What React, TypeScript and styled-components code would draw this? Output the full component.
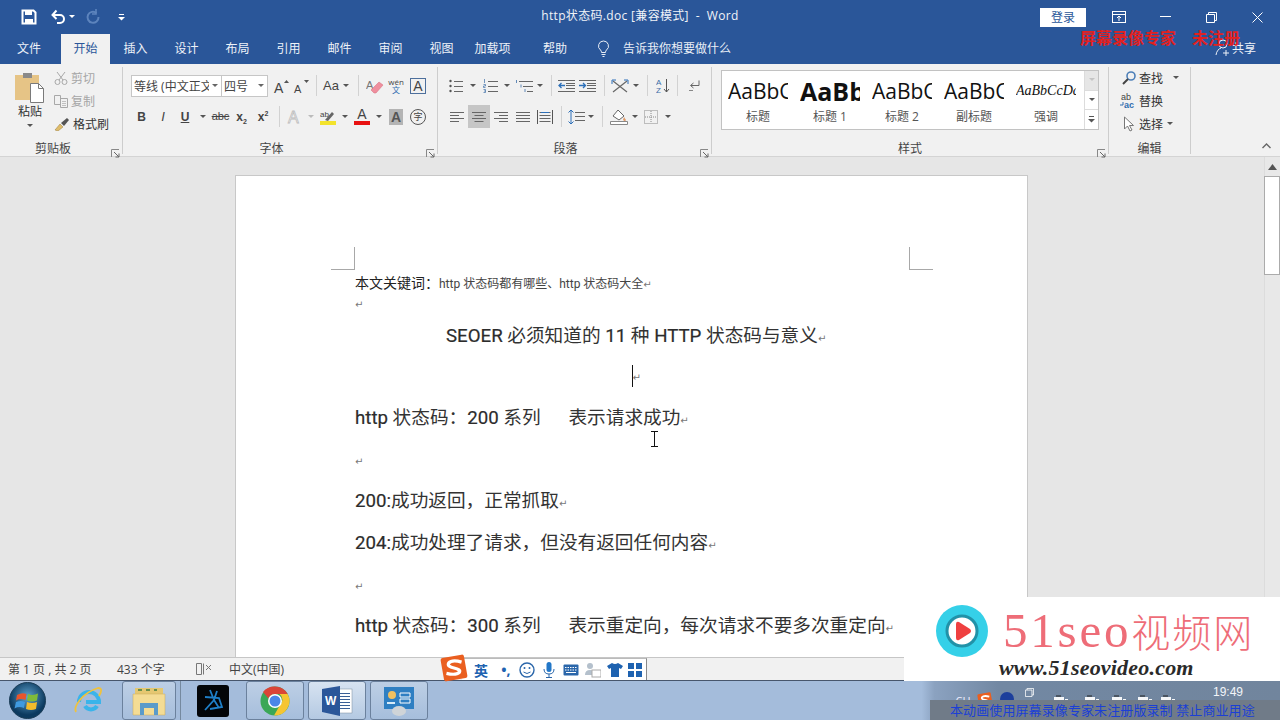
import React from "react";
import styled, { createGlobalStyle } from "styled-components";

const Global = createGlobalStyle`
  html, body { margin: 0; padding: 0; background: #fff; }
  body { font-family: "Open Sans", "Noto Sans CJK SC", sans-serif; }
  * { box-sizing: border-box; }
`;

const App0 = styled.div`
  position: relative; width: 1280px; height: 720px; overflow: hidden;
  display: flex; flex-direction: column; font-size: 12px; color: #444;
`;
const TitleBar = styled.div`
  height: 34px; background: #2a5699; display: grid; grid-template-columns: 1fr auto 1fr; align-items: center; color: #fff;
`;
const Qat = styled.div`display: flex; align-items: center; height: 34px; padding-left: 19px; gap: 0;`;
const QatBtn = styled.div<{ $w: number }>`
  width: ${p => p.$w}px; height: 34px; display: flex; align-items: center; justify-content: center;
`;
const Title = styled.div`font-size: 12px; color: #f0f3f8; letter-spacing: 0.33px; white-space: pre; padding-bottom: 4px;`;
const WinControls = styled.div`display: flex; justify-content: flex-end; align-items: center; height: 34px;`;
const Login = styled.div`
  width: 46px; height: 19px; background: #fff; color: #2a5699; margin-right: 10px;
  display: flex; align-items: center; justify-content: center; font-size: 12px;
`;
const WinBtn = styled.div`width: 46px; height: 34px; display: flex; align-items: center; justify-content: center;`;

const TabBar = styled.div`height: 30px; background: #2a5699; display: flex; align-items: stretch; position: relative;`;
const Tab = styled.div<{ $w: number; $active?: boolean; $pr?: number }>`
  width: ${p => p.$w}px; display: flex; align-items: center; justify-content: center; font-size: 12px; padding-bottom: 2px;
  padding-right: ${p => p.$pr ?? 0}px;
  background: ${p => (p.$active ? "#f1f1f1" : "transparent")};
  color: ${p => (p.$active ? "#2a5699" : "#eef2f8")};
`;
const TellMe = styled.div`display: flex; align-items: center; gap: 13px; padding-left: 5px; padding-bottom: 2px; color: #e9eef6; font-size: 12px;`;
const Share = styled.div`
  margin-left: auto; display: flex; align-items: center; gap: 1px; padding-right: 24px; padding-bottom: 2px; color: #eef2f8; font-size: 12px;
`;

const Ribbon = styled.div`
  height: 93px; background: #f1f1f1; border-bottom: 1px solid #d4d4d4; display: flex; padding-top: 3px; align-items: flex-start;
`;
const Group = styled.div<{ $w: number; $bare?: boolean }>`
  width: ${p => p.$w}px; height: 87px; flex: none; position: relative; display: flex; flex-direction: column;
  border-right: ${p => (p.$bare ? "none" : "1px solid #cdcdcd")};
`;
const GroupBody = styled.div`height: 71px; flex: none; display: flex;`;
const GroupLabel = styled.div<{ $pr?: number }>`
  height: 16px; flex: none; margin-top: 2px; display: flex; align-items: center; justify-content: center; font-size: 12px; color: #444;
  padding-right: ${p => p.$pr ?? 0}px;
`;
const Launcher = styled.div`position: absolute; right: 2px; bottom: 0; width: 9px; height: 9px;`;
const Collapse = styled.div`position: absolute; right: 9px; bottom: 1px;`;

const PasteCol = styled.div`
  width: 50px; padding-top: 5px; display: flex; flex-direction: column; align-items: center; flex: none; margin-left: 5px; margin-right: -1px;
  font-size: 12px; color: #333; line-height: 14px;
`;
const PasteLabel = styled.div`margin-top: 1px;`;
const ClipCol = styled.div`display: flex; flex-direction: column; margin-top: -1px;`;
const ClipRow = styled.div<{ $off?: boolean }>`
  height: 23px; display: flex; align-items: center; gap: 3px; font-size: 12px; color: ${p => (p.$off ? "#a6a6a6" : "#333")};
`;
const RowStack = styled.div<{ $left: number }>`
  padding-left: ${p => p.$left}px; padding-top: 7px; display: flex; flex-direction: column; gap: 8px;
`;
const Row = styled.div`display: flex; align-items: center; height: 23px;`;
const Combo = styled.div<{ $w: number }>`
  width: ${p => p.$w}px; height: 22px; background: #fff; border: 1px solid #c6c6c6; display: flex; align-items: center;
  padding-left: 2px; font-size: 12px; color: #444; white-space: nowrap; overflow: hidden; justify-content: space-between;
  margin-right: -1px;
`;
const ComboText = styled.span`overflow: hidden; flex: 1;`;
const ComboArrow = styled.span`width: 12px; flex: none; display: flex; justify-content: center; background: #fff;`;
const Btn = styled.div<{ $w: number; $on?: boolean }>`
  width: ${p => p.$w}px; height: 23px; flex: none; display: flex; align-items: center; justify-content: center;
  background: ${p => (p.$on ? "#c6c6c6" : "transparent")};
`;
const VSep = styled.div<{ $w: number }>`
  width: ${p => p.$w}px; height: 23px; flex: none; position: relative;
  &::after { content: ""; position: absolute; left: 50%; top: 1px; bottom: 1px; width: 1px; background: #d2d2d2; }
`;
const Dd = styled.div<{ $w: number; $off?: boolean; $short?: boolean }>`
  width: ${p => p.$w}px; height: ${p => (p.$short ? 12 : 23)}px; flex: none; display: flex; align-items: center; justify-content: center;
  &::after { content: ""; border-left: 3px solid transparent; border-right: 3px solid transparent;
    border-top: 3px solid ${p => (p.$off ? "#bbb" : "#555")}; }
`;
const Letter = styled.span<{ $b?: boolean; $i?: boolean; $c?: string; $s?: number }>`
  font-family: "Liberation Sans", sans-serif; font-size: ${p => p.$s ?? 12}px;
  font-weight: ${p => (p.$b ? 700 : 400)}; font-style: ${p => (p.$i ? "italic" : "normal")};
  color: ${p => p.$c ?? "#444"}; line-height: 1;
`;
const Under = styled(Letter)`text-decoration: underline;`;
const Strike = styled(Letter)`text-decoration: line-through;`;
const Sub = styled.sub`font-size: 7px; line-height: 0;`;
const Sup = styled.sup`font-size: 7px; line-height: 0;`;
const ColorA = styled.span<{ $bar: string }>`
  display: inline-flex; flex-direction: column; align-items: center; font-family: "Liberation Sans", sans-serif;
  font-size: 14px; line-height: 13px; color: #444; width: 16px;
  &::after { content: ""; display: block; width: 16px; height: 4px; background: ${p => p.$bar}; }
`;
const GrayA = styled.span`
  width: 14px; height: 16px; background: #b4b4b4; display: flex; align-items: center; justify-content: center;
  font-family: "Liberation Sans", sans-serif; font-size: 14px; font-weight: 700; color: #555;
`;
const BoxA = styled.span`
  width: 16px; height: 16px; border: 1px solid #4d6f9c; display: flex; align-items: center; justify-content: center;
  font-family: "Liberation Sans", sans-serif; font-size: 14px; color: #444;
`;
const CircleChar = styled.span`
  width: 16px; height: 16px; border-radius: 50%; border: 1px solid #555; display: flex; align-items: center; justify-content: center;
  font-size: 9px; color: #444;
`;
const Wen = styled.span`
  display: flex; flex-direction: column; align-items: center; font-size: 8px; line-height: 8px; color: #444;
  & > b { color: #2f6db0; font-weight: 400; }
`;

const Gallery = styled.div`
  margin: 3px 0 0 9px; width: 378px; height: 60px; background: #fff; border: 1px solid #c2c2c2; display: flex;
`;
const StyleItem = styled.div`
  width: 72px; flex: none; display: flex; flex-direction: column; align-items: center; padding-top: 4px;
`;
const Preview = styled.div<{ $kind?: "bold" | "em" }>`
  width: 60px; height: 32px; overflow: hidden; white-space: nowrap; display: flex; align-items: center; color: #111;
  font-family: ${p => (p.$kind === "em" ? '"Liberation Serif", serif' : '"Open Sans", sans-serif')};
  font-size: ${p => (p.$kind === "bold" ? 25 : p.$kind === "em" ? 14 : 21)}px;
  font-weight: ${p => (p.$kind === "bold" ? 700 : 400)};
  font-style: ${p => (p.$kind === "em" ? "italic" : "normal")};
`;
const StyleName = styled.div`font-size: 12px; color: #555; line-height: 16px; margin-top: 2px;`;
const GalleryScroll = styled.div`
  margin-left: auto; width: 14px; display: flex; flex-direction: column; border-left: 1px solid #dcdcdc;
`;
const GalleryCell = styled.div<{ $off?: boolean }>`
  flex: 1; display: flex; align-items: center; justify-content: center; border-bottom: 1px solid #dcdcdc;
  background: ${p => (p.$off ? "#e6e6e6" : "#fff")}; &:last-child { border-bottom: none; }
`;
const EditCol = styled.div`display: flex; flex-direction: column; padding-left: 11px; margin-top: -1px;`;
const EditRow = styled.div`height: 23px; display: flex; align-items: center; font-size: 12px; color: #333; gap: 2px;`;
const EditIcon = styled.span`width: 17px; display: flex; justify-content: center; flex: none;`;
const EditDd = styled.span<{ $w: number }>`
  width: ${p => p.$w}px; display: flex; justify-content: flex-end;
  &::after { content: ""; border-left: 3px solid transparent; border-right: 3px solid transparent; border-top: 3px solid #555; }
`;

const Workspace = styled.div`height: 500px; background: #e6e6e6; display: flex; overflow: hidden; padding-left: 235px;`;
const Page = styled.div`
  position: relative; width: 793px; height: 600px; margin-top: 18px; background: #fff; border: 1px solid #c8c8c8;
  padding: 96px 110px 0 119px; flex: none; color: #333;
`;
const Crop = styled.div<{ $right?: boolean }>`
  position: absolute; top: 71px; width: 24px; height: 23px; border-bottom: 1px solid #a8a8a8;
  ${p => (p.$right ? "left: 673px; border-left: 1px solid #a8a8a8;" : "left: 95px; border-right: 1px solid #a8a8a8;")}
`;
const Line = styled.div<{ $h: number; $center?: boolean; $adj?: number }>`
  height: ${p => p.$h}px; line-height: ${p => p.$h + (p.$adj ?? 4)}px; white-space: pre;
  text-align: ${p => (p.$center ? "center" : "left")};
  font-size: 18.67px; color: #333; font-family: Roboto, "Noto Sans CJK SC", sans-serif;
`;
const Lat = styled.span`color: #2c2c2c; -webkit-text-stroke: 0.2px #2c2c2c;`;
const KeyA = styled.span`font-size: 14px; color: #222;`;
const KeyB = styled.span`font-size: 12px; color: #444;`;
const Mark = styled.span`
  display: inline-block; font-family: "DejaVu Sans", sans-serif; font-size: 10px; color: #777; line-height: 1; width: 8px;
`;
const Caret = styled.span`display: inline-block; width: 1px; height: 22px; background: #111; vertical-align: middle;`;
const VScroll = styled.div`
  margin-left: auto; width: 16px; background: #e8e8e8; display: flex; flex-direction: column; flex: none; border-left: 1px solid #dcdcdc;
`;
const VArrow = styled.div`height: 19px; display: flex; align-items: center; justify-content: center;`;
const VThumb = styled.div`height: 99px; background: #fff; border: 1px solid #ababab; margin-left: -1px;`;

const StatusBar = styled.div`
  height: 24px; background: #f1f1f1; border-top: 1px solid #c6c6c6; border-bottom: 1px solid #47566c;
  display: flex; align-items: center; padding-left: 8px; font-size: 12px; color: #444; white-space: pre;
`;
const StatusItem = styled.span<{ $w: number }>`width: ${p => p.$w}px; flex: none; display: flex; align-items: center;`;

const Taskbar = styled.div`
  flex: 1; display: flex; align-items: stretch; background: linear-gradient(90deg, #a4bcdb 0 72%, #8ba2c0 73%, #7288a3 78%, #71859d 100%);
  position: relative;
`;
const TaskSlot = styled.div<{ $w: number }>`width: ${p => p.$w}px; flex: none; display: flex; align-items: center; justify-content: center;`;
const TaskButton = styled.div<{ $w: number; $active?: boolean }>`
  width: ${p => p.$w}px; flex: none; margin-right: 4px; display: flex; align-items: center; justify-content: center;
  border: 1px solid #6b819d; border-radius: 3px;
  background: ${p => (p.$active ? "linear-gradient(180deg,#d7e3f1,#b4c9e2)" : "linear-gradient(180deg,#bdcfe5,#a6bedc)")};
`;
const TaskDivider = styled.div`width: 1px; flex: none; margin: 0 6px 0 0; background: #75899f;`;
const Tray = styled.div`
  margin-left: auto; display: flex; align-items: flex-start; color: #eef; width: 325px; position: relative; font-size: 11px;
`;
const TrayItem = styled.span<{ $w: number; $top?: number }>`
  width: ${p => p.$w}px; flex: none; display: flex; justify-content: center; padding-top: ${p => p.$top ?? 11}px;
`;
const Clock = styled.span`margin-left: auto; margin-right: 37px; padding-top: 4px; color: #f2f5f9; font-size: 12px; font-family: "Liberation Sans", sans-serif;`;

const RedMark = styled.div`
  position: absolute; left: 1080px; top: 29px; color: #e2211f; font-size: 16px; font-weight: 700; line-height: 18px; white-space: pre;
`;
const Notice = styled.div`
  position: absolute; left: 930px; top: 700px; width: 350px; height: 20px; background: #707b88; color: #1b3fd6; font-size: 13px;
  line-height: 20px; padding-left: 20px; white-space: pre; letter-spacing: 0.1px;
`;
const Ime = styled.div`
  position: absolute; left: 462px; top: 658px; width: 185px; height: 22px; background: #fff; border-right: 1px solid #8a8a8a;
  border-top: 1px solid #bbb; display: flex; align-items: center;
`;
const ImeLogo = styled.div`position: absolute; left: 440px; top: 654px;`;
const ImeSlot = styled.span<{ $w: number }>`width: ${p => p.$w}px; flex: none; display: flex; align-items: center; justify-content: center;`;
const ImeChar = styled.span`color: #1e62b0; font-weight: 700; font-size: 14px;`;
const Beam = styled.div`position: absolute; left: 650px; top: 431px;`;
const Watermark = styled.div`
  position: absolute; left: 904px; top: 597px; width: 376px; height: 84px; background: #fff;
  display: flex; flex-direction: column; padding: 6px 0 0 32px;
`;
const WmTop = styled.div`display: flex; align-items: center; height: 55px;`;
const WmName = styled.div`
  margin-left: 15px; color: #ee6d78; font-family: "Liberation Serif", serif; font-size: 49px; letter-spacing: 2.8px; line-height: 55px; white-space: nowrap;
`;
const WmCjk = styled.span`font-family: "Noto Sans CJK SC", sans-serif; font-size: 39px; letter-spacing: 2px; font-weight: 300;`;
const WmUrl = styled.div`
  margin-left: 63px; margin-top: -2px; color: #2a2a2a; font-family: "Liberation Serif", serif; font-style: italic; font-weight: 700;
  font-size: 22px; line-height: 24px; letter-spacing: 0.2px; white-space: nowrap;
`;

const Lines = ({ x = 0, w = 14, ys, c = "#666" }: { x?: number; w?: number; ys: number[]; c?: string }) => (
  <>{ys.map(y => <path key={y} d={`M${x} ${y}.5h${w}`} stroke={c} fill="none" />)}</>
);
const Svg = ({ w = 16, h = 16, children }: { w?: number; h?: number; children: React.ReactNode }) => (
  <svg width={w} height={h} viewBox={`0 0 ${w} ${h}`}>{children}</svg>
);

const SaveIcon = () => (
  <Svg><path d="M1.5 1.5h11l2 2v11h-13z" fill="none" stroke="#fff" strokeWidth="2" /><rect x="4" y="2" width="7" height="4" fill="#fff" /><rect x="4" y="10" width="8" height="5" fill="#fff" /></Svg>
);
const UndoIcon = () => (
  <Svg><path d="M3 6h7a4 4 0 0 1 0 8H7" fill="none" stroke="#fff" strokeWidth="2" /><path d="M6.5 1.5 2.5 6l4 4" fill="none" stroke="#fff" strokeWidth="2" /></Svg>
);
const RedoIcon = () => (
  <Svg><path d="M11.5 4A5.5 5.5 0 1 0 13.5 8" fill="none" stroke="#5d84bd" strokeWidth="2" /><path d="M11 0v5h-4" fill="none" stroke="#5d84bd" strokeWidth="1.6" /></Svg>
);
const SmallDown = ({ c = "#fff" }: { c?: string }) => (
  <Svg w={6} h={4}><path d="M0 0h6L3 3z" fill={c} /></Svg>
);
const Customize = ({ c = "#fff" }: { c?: string }) => (
  <Svg w={7} h={7}><path d="M1 .5h5" stroke={c} /><path d="M0 3h7L3.5 6.5z" fill={c} /></Svg>
);
const RibbonDisp = () => (
  <Svg w={14} h={12}><rect x=".5" y=".5" width="13" height="11" fill="none" stroke="#fff" /><path d="M1 3.5h12M7 10V5M5 7l2-2 2 2" fill="none" stroke="#fff" /></Svg>
);
const MinI = () => <Svg w={11} h={2}><path d="M0 .5h11" stroke="#fff" /></Svg>;
const RestoreI = ({ s = 11 }: { s?: number }) => (
  <svg width={s} height={s} viewBox="0 0 11 11"><path d="M.5 2.5h8v8h-8zM2.5 2.5v-2h8v8h-2" fill="none" stroke="#fff" /></svg>
);
const CloseI = () => <Svg w={11} h={11}><path d="M.5.5l10 10M10.5.5l-10 10" stroke="#fff" fill="none" /></Svg>;
const Bulb = () => (
  <Svg w={13} h={17}><path d="M6.5 1a5 5 0 0 0-3 9c.7.6 1 1.500 1 2.500h4c0-1 .3-1.900 1-2.500a5 5 0 0 0-3-9zM4.500 14.500h4M5.500 16.500h2" fill="none" stroke="#e9eef6" /></Svg>
);
const PersonPlus = () => (
  <Svg w={16} h={18}><circle cx="8" cy="5" r="4" fill="none" stroke="#eef2f8" /><path d="M1 16c.5-4 3-6.500 5-7M11 11v6M8 14h6" fill="none" stroke="#eef2f8" /></Svg>
);
const PasteIcon = () => (
  <Svg w={30} h={32}>
    <rect x="0" y="3" width="24" height="25" fill="#e6c486" />
    <rect x="8" y="1" width="9" height="5" fill="#8a8a8a" />
    <path d="M15.500 11.500h8l5 5v14h-13z" fill="#fff" stroke="#7a7a7a" />
    <path d="M23.500 11.500v5h5" fill="none" stroke="#7a7a7a" />
  </Svg>
);
const CutIcon = () => (
  <Svg w={14} h={14}><path d="M3 1l6 8M11 1L5 9" stroke="#a8a8a8" fill="none" /><circle cx="3.500" cy="11" r="2.500" fill="none" stroke="#a8a8a8" /><circle cx="10.500" cy="11" r="2.500" fill="none" stroke="#a8a8a8" /></Svg>
);
const CopyIcon = () => (
  <Svg w={14} h={14}><path d="M.5 1.500h6v9h-6zM6.500 4.500h7v9h-7z" fill="#f1f1f1" stroke="#a8a8a8" /><Lines x={8} w={4} ys={[7, 9, 11]} c="#c0c0c0" /></Svg>
);
const BrushIcon = () => (
  <Svg w={16} h={14}><path d="M1 13l5-6 3 3-5 4z" fill="#e0bd6b" stroke="#9a7d3a" strokeWidth=".5" /><path d="M7 6l6-5 2 2-5 6z" fill="#555" /></Svg>
);
const GrowA = ({ up }: { up: boolean }) => (
  <Svg w={16} h={16}>
    <text x="1" y="15" fontFamily="Liberation Sans" fontSize={up ? 14 : 11} fill="#444">A</text>
    <path d={up ? "M11 5l2.500-3L16 5z" : "M11 2h5l-2.500 3z"} fill="#555" />
  </Svg>
);
const EraserIcon = () => (
  <Svg w={18} h={16}><text x="0" y="11" fontFamily="Liberation Sans" fontSize="11" fill="#777">A</text><path d="M5 12l8-8 4 3-7 8H8z" fill="#ef8f9e" stroke="#d46a7a" strokeWidth=".5" /></Svg>
);
const OutlineA = () => (
  <svg width="16" height="16" viewBox="0 0 16 16"><text x="1" y="14" fontFamily="Liberation Sans" fontSize="16" fill="#fff" stroke="#bdbdbd" strokeWidth=".8">A</text></svg>
);
const HighlightIcon = () => (
  <Svg w={16} h={16}><text x="0" y="8" fontFamily="Liberation Sans" fontSize="8" fill="#444">ab</text><path d="M5 11l7-8 2 2-6 7z" fill="#666" /><rect y="12" width="16" height="4" fill="#f3e32c" /></Svg>
);
const Bullets = () => (
  <Svg w={14} h={14}>
    <circle cx="1.500" cy="2" r="1.200" fill="#555" /><circle cx="1.500" cy="7" r="1.200" fill="#555" /><circle cx="1.500" cy="12" r="1.200" fill="#555" />
    <Lines x={5} w={9} ys={[2, 7, 12]} />
  </Svg>
);
const Numbers = () => (
  <Svg w={15} h={14}>
    <path d="M1.500 0v4M.500 5.500h2v1.500h-2v1.500h2M.500 10.500h2v3h-2M1 12h1.500" stroke="#3c6ea8" fill="none" strokeWidth=".7" />
    <Lines x={5} w={10} ys={[2, 7, 12]} />
  </Svg>
);
const Multi = () => (
  <Svg w={17} h={14}>
    <path d="M.500 1v3M5 5.500v3M9 10v3" stroke="#3c6ea8" strokeWidth=".8" fill="none" />
    <Lines x={3} w={14} ys={[2]} /><Lines x={7} w={10} ys={[7]} /><Lines x={11} w={6} ys={[12]} />
  </Svg>
);
const Indent = ({ dec }: { dec: boolean }) => (
  <Svg w={17} h={14}>
    <Lines x={0} w={17} ys={[1, 12]} /><Lines x={8} w={9} ys={[4, 6, 9]} />
    <path d={dec ? "M7 6.500H1M3.500 4l-2.500 2.500 2.500 2.500" : "M0 6.500h6M4 4l2.500 2.500L4 9"} stroke="#2c6fb8" strokeWidth="1.300" fill="none" />
  </Svg>
);
const ChineseLayout = () => (
  <Svg w={18} h={14}><path d="M2 2l14 11M16 2L2 13" stroke="#666" strokeWidth="1.200" fill="none" /><path d="M1 5V1h4M17 5V1h-4" stroke="#2c6fb8" fill="none" /></Svg>
);
const SortIcon = () => (
  <Svg w={14} h={16}>
    <text x="0" y="7" fontFamily="Liberation Sans" fontSize="8" fill="#3c6ea8">A</text>
    <text x="0" y="15" fontFamily="Liberation Sans" fontSize="8" fill="#3c6ea8">Z</text>
    <path d="M10.500 1v13M8 11l2.500 3 2.500-3" stroke="#555" fill="none" />
  </Svg>
);
const ParaMark = () => (
  <Svg w={12} h={12}><path d="M11 .5v5H3M5.500 3l-3 2.500 3 2.500" stroke="#666" fill="none" /><path d="M1 10.500h4" stroke="#888" fill="none" /></Svg>
);
const Align = ({ k }: { k: "l" | "c" | "r" | "j" }) => {
  const wid = k === "j" ? [14, 14, 14, 14] : [14, 9, 14, 9];
  return (
    <Svg w={14} h={12}>
      {wid.map((w, i) => {
        const x = k === "c" ? (14 - w) / 2 : k === "r" ? 14 - w : 0;
        return <path key={i} d={`M${x} ${i * 3 + 1}.5h${w}`} stroke="#666" fill="none" />;
      })}
    </Svg>
  );
};
const Distribute = () => (
  <Svg w={16} h={16}><path d="M.500 1v14M15.500 1v14" stroke="#555" fill="none" /><Lines x={2.500} w={11} ys={[3, 6, 9, 12]} /><path d="M4 3.500h8" stroke="#2c6fb8" /></Svg>
);
const SpacingIcon = () => (
  <Svg w={17} h={16}><path d="M3 1v14M.500 3.500 3 1l2.500 2.500M.500 12.500 3 15l2.500-2.500" stroke="#2c6fb8" fill="none" /><Lines x={7} w={10} ys={[3, 7, 11]} /></Svg>
);
const ShadingIcon = () => (
  <Svg w={18} h={17}><path d="M3 8l5-6 6 6-5 4z" fill="#fff" stroke="#666" /><path d="M14 9l2 3-1 1.500-2-1.500z" fill="#e09a6a" /><path d="M.500 13.500h17v3H.500z" fill="#fff" stroke="#888" /></Svg>
);
const BorderIcon = () => (
  <Svg w={14} h={14}><rect x=".5" y=".5" width="13" height="13" fill="none" stroke="#888" strokeDasharray="1 1" /><path d="M7 1v12M1 7h12" stroke="#888" strokeDasharray="1 1" /></Svg>
);
const LauncherI = () => (
  <Svg w={9} h={9}><path d="M.500 8V.500H8" fill="none" stroke="#888" /><path d="M3 3l5 5M8 4.500V8H4.500" fill="none" stroke="#666" /></Svg>
);
const FindI = () => (
  <Svg w={14} h={14}><circle cx="9" cy="5" r="4" fill="none" stroke="#4d7fb8" strokeWidth="1.600" /><path d="M6 8l-5 5" stroke="#444" strokeWidth="2" /></Svg>
);
const ReplaceI = () => (
  <svg width="17" height="16" viewBox="0 0 17 16">
    <text x="1" y="7" fontFamily="Liberation Sans" fontSize="9" fill="#444">ab</text>
    <text x="4" y="15" fontFamily="Liberation Sans" fontSize="9" fontWeight="700" fill="#2f6db0">ac</text>
    <path d="M3 9v3H0" stroke="#2f6db0" fill="none" />
  </svg>
);
const SelectI = () => (
  <Svg w={12} h={16}><path d="M1.500 1v12l3-3 2.500 5 2-1-2.500-4.500h4z" fill="#fff" stroke="#777" /></Svg>
);
const PageMarkI = () => (
  <Svg w={16} h={14}><path d="M.500 1.500h5v11h-5zM7.500 1.500v11" fill="none" stroke="#777" /><path d="M10 3l5 5M15 3l-5 5" stroke="#777" fill="none" /></Svg>
);
const Orb = () => (
  <svg width="37" height="37" viewBox="0 0 37 37">
    <defs><radialGradient id="o" cx=".5" cy=".4"><stop offset="0" stopColor="#5fa3cf" /><stop offset="1" stopColor="#0c3a5f" /></radialGradient></defs>
    <circle cx="18.500" cy="18.500" r="18" fill="url(#o)" stroke="#1b3c56" />
    <path d="M8 13q5-3 9.500-1l-1 6q-5-2-9.500 .5z" fill="#e8552c" />
    <path d="M19 12q5 2 10-.5l-1 7q-5 2-10 0z" fill="#7fbb3a" />
    <path d="M7 20q5-2 9 0l-1 6q-5-2-9.500 .5z" fill="#3f9ae0" />
    <path d="M18 20q5 2 10 0l-1 7q-5 2-10 0z" fill="#f2bb2c" />
  </svg>
);
const IeIcon = () => (
  <svg width="32" height="32" viewBox="0 0 32 32">
    <path d="M6 17a10 10 0 0 1 20 0H13M12 21a7 7 0 0 0 12 0" transform="translate(1,0)" fill="none" stroke="#3ab4ea" strokeWidth="4" />
    <path d="M4 27C1 22 10 8 26 3c4 0 4 3 1 8" fill="none" stroke="#f0c23c" strokeWidth="1.800" />
  </svg>
);
const FolderIcon = () => (
  <svg width="34" height="30" viewBox="0 0 34 30">
    <rect x="3" y="2" width="28" height="9" fill="#e5c771" />
    <path d="M6 4h4M14 4h4M22 4h3" stroke="#6a8f4a" strokeWidth="2" />
    <path d="M1 8h32v21H1z" fill="#f4dc94" stroke="#c9a95a" strokeWidth=".5" />
    <path d="M8 17h18v12h-4v-7H12v7H8z" fill="#5b9bc9" />
  </svg>
);
const BattleIcon = () => (
  <svg width="32" height="32" viewBox="0 0 32 32">
    <rect width="32" height="32" rx="3" fill="#030508" />
    <path d="M13 5l4 10-9 10M8 12l14 1 3 9-12 2M20 6l-3 9 5 8" fill="none" stroke="#1e7fc8" strokeWidth="1.800" />
  </svg>
);
const ChromeIcon = () => (
  <svg width="30" height="30" viewBox="0 0 30 30">
    <circle cx="15" cy="15" r="14.500" fill="#3aa757" />
    <path d="M15 .5A14.500 14.500 0 0 1 27.600 8H15a7 7 0 0 0-6.500 4.500L3 6A14.500 14.500 0 0 1 15 .5z" fill="#da4537" />
    <path d="M27.600 8A14.500 14.500 0 0 1 14 29.500L20 19a7 7 0 0 0-.5-11z" fill="#f6c531" />
    <circle cx="15" cy="15" r="7" fill="#fff" /><circle cx="15" cy="15" r="5.500" fill="#4a86e8" />
  </svg>
);
const WordIcon = () => (
  <svg width="32" height="32" viewBox="0 0 32 32">
    <rect x="12" y="4" width="19" height="24" fill="#fff" stroke="#7a8a9c" strokeWidth=".5" />
    <Lines x={19} w={10} ys={[8, 11, 14, 17, 20, 23]} c="#3a5f96" />
    <path d="M1 4l18-3v30L1 27z" fill="#2a5699" />
    <text x="4" y="20" fontFamily="Liberation Sans" fontSize="12" fontWeight="700" fill="#fff">W</text>
  </svg>
);
const PanelIcon = () => (
  <svg width="32" height="32" viewBox="0 0 32 32">
    <rect x="1" y="2" width="30" height="22" fill="#2f7fc2" />
    <circle cx="9" cy="10" r="4" fill="#f0c060" /><path d="M17 8h10v4H17zM17 14h10v4H17z" fill="none" stroke="#fff" />
    <path d="M4 18h8" stroke="#d8ecf8" strokeWidth="2" />
    <ellipse cx="16" cy="26" rx="7" ry="5" fill="#cfd4d8" />
  </svg>
);
const VideoLogo = () => (
  <svg width="52" height="52" viewBox="0 0 52 52">
    <circle cx="26" cy="26" r="26" fill="#35d0e8" />
    <circle cx="26" cy="26" r="15" fill="#fff" stroke="#2192a8" strokeWidth="3" />
    <path d="M20 19q0-3 3-2l11 7q2 2 0 4l-11 7q-3 1-3-2z" fill="#ef4040" />
  </svg>
);
const SogouLogo = ({ s = 26 }: { s?: number }) => (
  <svg width={s} height={s} viewBox="0 0 26 26" style={{ display: "block" }}>
    <rect x="2" y="2" width="22" height="22" rx="2" fill="#ea5f20" transform="rotate(-10 13 13)" />
    <path d="M20 7.500q-9-2.500-12 1-1.500 3 5 4.500t5 4q-3 3-12 1" fill="none" stroke="#fff" strokeWidth="3" />
  </svg>
);
const IBeam = () => (
  <svg width="9" height="16" viewBox="0 0 9 16"><path d="M1 .5h7M4.500 .5v15M1 15.500h7" stroke="#111" fill="none" /></svg>
);
const Smile = () => (
  <Svg><circle cx="8" cy="8" r="7" fill="none" stroke="#2a66aa" strokeWidth="1.400" /><circle cx="5.500" cy="6" r="1" fill="#2a66aa" /><circle cx="10.500" cy="6" r="1" fill="#2a66aa" /><path d="M4.500 10q3.500 3 7 0" fill="none" stroke="#2a66aa" /></Svg>
);
const Mic = () => (
  <Svg w={12} h={16}><rect x="3.500" y="0" width="5" height="10" rx="2.500" fill="#2277c8" /><path d="M1 7q0 5 5 5t5-5M6 12v3M3 15.500h6" fill="none" stroke="#2a66aa" /></Svg>
);
const Kbd = () => (
  <Svg w={16} h={12}><rect x=".5" y=".5" width="15" height="11" rx="1" fill="#2a66aa" /><path d="M2 3.500h12M2 6h12" stroke="#fff" strokeDasharray="1.500 1" /><path d="M3 8.500h10" stroke="#fff" /></Svg>
);
const ImeUser = () => (
  <Svg w={16} h={16}><circle cx="5" cy="4" r="3" fill="#b4c0cc" /><path d="M0 13q0-5 5-5t5 5z" fill="#b4c0cc" /><rect x="7" y="8" width="9" height="7" fill="#fff" stroke="#aaa" /></Svg>
);
const Shirt = () => (
  <Svg w={16} h={14}><path d="M5 0 0 3l2 3 2-1v9h8V5l2 1 2-3-5-3q-3 2-6 0z" fill="#1e62b0" /></Svg>
);
const Tiles = () => (
  <Svg w={14} h={14}><path d="M0 0h6v6H0zM8 0h6v6H8zM0 8h6v6H0zM8 8h6v6H8z" fill="#1e62b0" /></Svg>
);
const TrayGlyph = () => (
  <Svg w={16} h={8}><path d="M1 2h10v6H1zM12 4h3v4h-3z" fill="#f4f6f8" /><path d="M3 1h5" stroke="#222" /></Svg>
);

const tabs: [string, number, boolean?, number?][] = [
  ["文件", 61, false, 3], ["开始", 49, true], ["插入", 51], ["设计", 51], ["布局", 51], ["引用", 51],
  ["邮件", 51], ["审阅", 51], ["视图", 51], ["加载项", 51], ["帮助", 74],
];
const styleItems: [string, string, ("bold" | "em")?][] = [
  ["AaBbCcDd", "标题"], ["AaBbCcDd", "标题 1", "bold"], ["AaBbCcDd", "标题 2"], ["AaBbCcDd", "副标题"], ["AaBbCcDd", "强调", "em"],
];

export default function App() {
  return (
    <App0>
      <Global />
      <TitleBar>
        <Qat>
          <QatBtn $w={20}><SaveIcon /></QatBtn>
          <QatBtn $w={10} />
          <QatBtn $w={18}><UndoIcon /></QatBtn>
          <QatBtn $w={10}><SmallDown /></QatBtn>
          <QatBtn $w={7} />
          <QatBtn $w={18}><RedoIcon /></QatBtn>
          <QatBtn $w={15} />
          <QatBtn $w={9}><Customize /></QatBtn>
        </Qat>
        <Title>http状态码.doc [兼容模式]  -  Word</Title>
        <WinControls>
          <Login>登录</Login>
          <WinBtn><RibbonDisp /></WinBtn>
          <WinBtn><MinI /></WinBtn>
          <WinBtn><RestoreI /></WinBtn>
          <WinBtn><CloseI /></WinBtn>
        </WinControls>
      </TitleBar>

      <TabBar>
        {tabs.map(([t, w, a, pr]) => <Tab key={t} $w={w} $active={a} $pr={pr}>{t}</Tab>)}
        <TellMe><Bulb />告诉我你想要做什么</TellMe>
        <Share><PersonPlus />共享</Share>
      </TabBar>

      <Ribbon>
        <Group $w={123}>
          <GroupBody>
            <PasteCol>
              <PasteIcon />
              <PasteLabel>粘贴</PasteLabel>
              <Dd $w={12} $short />
            </PasteCol>
            <ClipCol>
              <ClipRow $off><CutIcon />剪切</ClipRow>
              <ClipRow $off><CopyIcon />复制</ClipRow>
              <ClipRow><BrushIcon />格式刷</ClipRow>
            </ClipCol>
          </GroupBody>
          <GroupLabel $pr={16}>剪贴板</GroupLabel>
          <Launcher><LauncherI /></Launcher>
        </Group>

        <Group $w={315}>
          <GroupBody>
            <RowStack $left={8}>
              <Row>
                <Combo $w={91}><ComboText>等线 (中文正文)</ComboText><ComboArrow><SmallDown c="#666" /></ComboArrow></Combo>
                <Combo $w={47}><ComboText>四号</ComboText><ComboArrow><SmallDown c="#666" /></ComboArrow></Combo>
                <Btn $w={4} />
                <Btn $w={20}><GrowA up /></Btn>
                <Btn $w={20}><GrowA up={false} /></Btn>
                <VSep $w={10} />
                <Btn $w={20}><Letter $s={13}>Aa</Letter></Btn>
                <Dd $w={10} />
                <VSep $w={14} />
                <Btn $w={20}><EraserIcon /></Btn>
                <Btn $w={22}><Wen><span>wén</span><b>文</b></Wen></Btn>
                <Btn $w={22}><BoxA>A</BoxA></Btn>
              </Row>
              <Row>
                <Btn $w={21}><Letter $b>B</Letter></Btn>
                <Btn $w={22}><Letter $i $s={13}>I</Letter></Btn>
                <Btn $w={22}><Under $b>U</Under></Btn>
                <Dd $w={14} />
                <Btn $w={21}><Strike $s={11}>abc</Strike></Btn>
                <Btn $w={21}><Letter $b>x<Sub>2</Sub></Letter></Btn>
                <Btn $w={22}><Letter $b>x<Sup>2</Sup></Letter></Btn>
                <VSep $w={10} />
                <Btn $w={22}><OutlineA /></Btn>
                <Dd $w={10} $off />
                <Btn $w={24}><HighlightIcon /></Btn>
                <Dd $w={10} />
                <Btn $w={24}><ColorA $bar="#e81212">A</ColorA></Btn>
                <Dd $w={10} />
                <Btn $w={24}><GrayA>A</GrayA></Btn>
                <Btn $w={20}><CircleChar>字</CircleChar></Btn>
              </Row>
            </RowStack>
          </GroupBody>
          <GroupLabel $pr={17}>字体</GroupLabel>
          <Launcher><LauncherI /></Launcher>
        </Group>

        <Group $w={274}>
          <GroupBody>
            <RowStack $left={8}>
              <Row>
                <Btn $w={20}><Bullets /></Btn>
                <Dd $w={14} />
                <Btn $w={20}><Numbers /></Btn>
                <Dd $w={14} />
                <Btn $w={20}><Multi /></Btn>
                <Dd $w={12} />
                <VSep $w={10} />
                <Btn $w={20}><Indent dec /></Btn>
                <Btn $w={23}><Indent dec={false} /></Btn>
                <VSep $w={10} />
                <Btn $w={22}><ChineseLayout /></Btn>
                <Dd $w={10} />
                <VSep $w={12} />
                <Btn $w={20}><SortIcon /></Btn>
                <VSep $w={8} />
                <Btn $w={26}><ParaMark /></Btn>
              </Row>
              <Row>
                <Btn $w={22}><Align k="l" /></Btn>
                <Btn $w={22} $on><Align k="c" /></Btn>
                <Btn $w={22}><Align k="r" /></Btn>
                <Btn $w={22}><Align k="j" /></Btn>
                <Btn $w={22}><Distribute /></Btn>
                <VSep $w={10} />
                <Btn $w={20}><SpacingIcon /></Btn>
                <Dd $w={10} />
                <VSep $w={12} />
                <Btn $w={22}><ShadingIcon /></Btn>
                <Dd $w={10} />
                <Btn $w={22}><BorderIcon /></Btn>
                <Dd $w={12} />
              </Row>
            </RowStack>
          </GroupBody>
          <GroupLabel $pr={18}>段落</GroupLabel>
          <Launcher><LauncherI /></Launcher>
        </Group>

        <Group $w={397}>
          <GroupBody>
            <Gallery>
              {styleItems.map(([p, n, k]) => (
                <StyleItem key={n}>
                  <Preview $kind={k}>{p}</Preview>
                  <StyleName>{n}</StyleName>
                </StyleItem>
              ))}
              <GalleryScroll>
                <GalleryCell $off><SmallDown c="#c4c4c4" /></GalleryCell>
                <GalleryCell><SmallDown c="#555" /></GalleryCell>
                <GalleryCell><Customize c="#555" /></GalleryCell>
              </GalleryScroll>
            </Gallery>
          </GroupBody>
          <GroupLabel>样式</GroupLabel>
          <Launcher><LauncherI /></Launcher>
        </Group>

        <Group $w={82}>
          <GroupBody>
            <EditCol>
              <EditRow><EditIcon><FindI /></EditIcon>查找<EditDd $w={14} /></EditRow>
              <EditRow><EditIcon><ReplaceI /></EditIcon>替换</EditRow>
              <EditRow><EditIcon><SelectI /></EditIcon>选择<EditDd $w={8} /></EditRow>
            </EditCol>
          </GroupBody>
          <GroupLabel>编辑</GroupLabel>
        </Group>

        <Group $w={89} $bare>
          <Collapse><svg width="9" height="6" viewBox="0 0 9 6"><path d="M.5 5l4-4 4 4" fill="none" stroke="#666" strokeWidth="1.400" /></svg></Collapse>
        </Group>
      </Ribbon>

      <Workspace>
        <Page>
          <Crop />
          <Crop $right />
          <Line $h={20} $adj={0}><KeyA>本文关键词：</KeyA><KeyB>http 状态码都有哪些、http 状态码大全</KeyB><Mark>↵</Mark></Line>
          <Line $h={22} $adj={-2}><Mark>↵</Mark></Line>
          <Line $h={40} $center><Lat>SEOER</Lat> 必须知道的 <Lat>11</Lat> 种 <Lat>HTTP</Lat> 状态码与意义<Mark>↵</Mark></Line>
          <Line $h={42} $center $adj={0}><Caret /><Mark>↵</Mark></Line>
          <Line $h={40}><Lat>http</Lat> 状态码：<Lat>200</Lat> 系列      表示请求成功<Mark>↵</Mark></Line>
          <Line $h={48} $adj={-2}><Mark>↵</Mark></Line>
          <Line $h={30}><Lat>200:</Lat>成功返回，正常抓取<Mark>↵</Mark></Line>
          <Line $h={54}><Lat>204:</Lat>成功处理了请求，但没有返回任何内容<Mark>↵</Mark></Line>
          <Line $h={34} $adj={-2}><Mark>↵</Mark></Line>
          <Line $h={44}><Lat>http</Lat> 状态码：<Lat>300</Lat> 系列      表示重定向，每次请求不要多次重定向<Mark>↵</Mark></Line>
        </Page>
        <VScroll>
          <VArrow><svg width="9" height="6" viewBox="0 0 9 6"><path d="M4.500 0l4.500 6H0z" fill="#555" /></svg></VArrow>
          <VThumb />
        </VScroll>
      </Workspace>

      <StatusBar>
        <StatusItem $w={109}>第 1 页 , 共 2 页</StatusItem>
        <StatusItem $w={79}>433 个字</StatusItem>
        <StatusItem $w={33}><PageMarkI /></StatusItem>
        <StatusItem $w={70}>中文(中国)</StatusItem>
      </StatusBar>

      <Taskbar>
        <TaskSlot $w={54}><Orb /></TaskSlot>
        <TaskSlot $w={68}><IeIcon /></TaskSlot>
        <TaskButton $w={54}><FolderIcon /></TaskButton>
        <TaskDivider />
        <TaskSlot $w={52}><BattleIcon /></TaskSlot>
        <TaskSlot $w={7} />
        <TaskButton $w={58}><ChromeIcon /></TaskButton>
        <TaskButton $w={58} $active><WordIcon /></TaskButton>
        <TaskButton $w={58}><PanelIcon /></TaskButton>
        <Tray>
          <TrayItem $w={16} $top={12}>CH</TrayItem>
          <TrayItem $w={28}><SogouLogo s={16} /></TrayItem>
          <TrayItem $w={16}><svg width="14" height="14" viewBox="0 0 14 14"><circle cx="7" cy="7" r="7" fill="#1c3f9c" /></svg></TrayItem>
          <TrayItem $w={28} $top={7}><RestoreI s={9} /></TrayItem>
          <TrayItem $w={35} $top={14}><TrayGlyph /></TrayItem>
          <TrayItem $w={28} $top={14}><TrayGlyph /></TrayItem>
          <TrayItem $w={25} $top={14}><TrayGlyph /></TrayItem>
          <TrayItem $w={28} $top={14}><TrayGlyph /></TrayItem>
          <TrayItem $w={18} $top={14}><TrayGlyph /></TrayItem>
          <Clock>19:49</Clock>
        </Tray>
      </Taskbar>

      <RedMark>屏幕录像专家　未注册</RedMark>
      <Watermark>
        <WmTop>
          <VideoLogo />
          <WmName>51seo<WmCjk>视频网</WmCjk></WmName>
        </WmTop>
        <WmUrl>www.51seovideo.com</WmUrl>
      </Watermark>
      <Ime>
        <ImeSlot $w={4} />
        <ImeSlot $w={30}><ImeChar>英</ImeChar></ImeSlot>
        <ImeSlot $w={20}><ImeChar>•,</ImeChar></ImeSlot>
        <ImeSlot $w={22}><Smile /></ImeSlot>
        <ImeSlot $w={22}><Mic /></ImeSlot>
        <ImeSlot $w={21}><Kbd /></ImeSlot>
        <ImeSlot $w={24}><ImeUser /></ImeSlot>
        <ImeSlot $w={19}><Shirt /></ImeSlot>
        <ImeSlot $w={22}><Tiles /></ImeSlot>
      </Ime>
      <ImeLogo><SogouLogo s={28} /></ImeLogo>
      <Notice>本动画使用屏幕录像专家未注册版录制 禁止商业用途</Notice>
      <Beam><IBeam /></Beam>
    </App0>
  );
}
